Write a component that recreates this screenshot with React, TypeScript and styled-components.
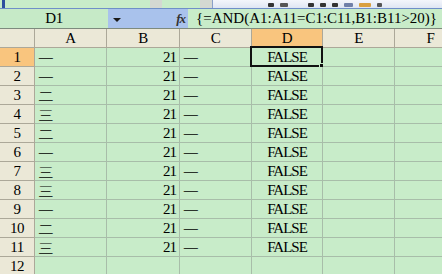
import React from "react";
import styled, { createGlobalStyle } from "styled-components";

const GlobalStyle = createGlobalStyle`
  html, body { margin: 0; padding: 0; background: #c8ecc9; overflow: hidden; }
  * { box-sizing: border-box; }
`;

const Page = styled.div`
  width: 442px;
  height: 274px;
  overflow: hidden;
  background: #c8ecc9;
  font-family: "Liberation Serif", "Noto Sans CJK SC", serif;
  color: #000;
`;

const TopStrip = styled.div`
  display: flex;
  height: 9px;
  border-bottom: 1px solid #6f8fc8;
  background: #c8ecc9;
  overflow: hidden;
`;

const StripSeg = styled.div<{ $w: number; $bg: string }>`
  width: ${(p) => p.$w}px;
  flex: none;
  background: ${(p) => p.$bg};
  height: 100%;
`;

const Toolbar = styled.div`
  flex: 1;
  display: flex;
  align-items: flex-end;
  gap: 6px;
  padding-left: 55px;
  background: linear-gradient(#f4f6fb, #dfe6f3);
  border-left: 1px solid #8aa0c8;
`;

const ToolIcon = styled.div<{ $w: number; $c: string }>`
  width: ${(p) => p.$w}px;
  height: 4px;
  margin-bottom: 1px;
  background: ${(p) => p.$c};
  border-radius: 1px;
`;

const ToolGap = styled.div`
  width: 8px;
`;

const FormulaBar = styled.div`
  display: flex;
  height: 20px;
  border-bottom: 1px solid #7e8a7e;
  line-height: 1;
`;

const NameBox = styled.div`
  width: 108px;
  flex: none;
  display: flex;
  align-items: center;
  justify-content: center;
  font-size: 15px;
  background: #c6eac7;
  letter-spacing: -0.5px;
`;

const NameDrop = styled.div`
  width: 80px;
  flex: none;
  display: flex;
  align-items: center;
  justify-content: space-between;
  padding: 0 3px 0 5px;
  background: #a9c2ec;
`;

const Caret = styled.span`
  width: 0;
  height: 0;
  border-left: 4px solid transparent;
  border-right: 4px solid transparent;
  border-top: 4px solid #1a1a1a;
  margin-top: 2px;
`;

const Fx = styled.span`
  font-family: "Liberation Serif", serif;
  font-style: italic;
  font-weight: bold;
  font-size: 13px;
  color: #333;
  letter-spacing: -1px;
`;

const FormulaText = styled.div`
  flex: 1;
  display: flex;
  align-items: center;
  padding-left: 8px;
  font-size: 15px;
  white-space: nowrap;
  background: #c8ecc9;
  overflow: hidden;
`;

const Sheet = styled.div`
  display: grid;
  grid-template-columns: 35px 72px 73px 72px 71px 72px 72px;
  grid-auto-rows: 19px;
  line-height: 1;
`;

const Header = styled.div<{ $selected?: boolean }>`
  display: flex;
  align-items: center;
  justify-content: center;
  font-size: 15px;
  background: ${(p) => (p.$selected ? "#f9c57e" : "#ebe8d7")};
  border-right: 1px solid #aca899;
  border-bottom: 1px solid #aca899;
  letter-spacing: -0.5px;
`;

const Cell = styled.div<{ $align: "left" | "right" | "center" }>`
  position: relative;
  display: flex;
  align-items: center;
  justify-content: ${(p) =>
    p.$align === "left" ? "flex-start" : p.$align === "right" ? "flex-end" : "center"};
  padding: ${(p) => (p.$align === "left" ? "0 0 0 3px" : p.$align === "right" ? "0 3px 0 0" : "0")};
  font-family: "Liberation Serif", serif;
  font-size: 15px;
  letter-spacing: -1px;
  background: #c8ecc9;
  border-right: 1px solid #a8bda9;
  border-bottom: 1px solid #a8bda9;
  white-space: nowrap;
`;

const CjkText = styled.span`
  display: inline-block;
  font-family: "Noto Sans CJK SC", sans-serif;
  font-size: 13px;
  font-weight: 300;
  letter-spacing: 0;
  transform: scaleX(1.2);
  transform-origin: left center;
`;

const ActiveFrame = styled.div`
  position: absolute;
  left: -2px;
  top: -2px;
  right: -1px;
  bottom: -1px;
  border: 2px solid #111;
  pointer-events: none;
`;

const FillHandle = styled.div`
  position: absolute;
  right: -4px;
  bottom: -4px;
  width: 6px;
  height: 6px;
  background: #111;
  border: 1px solid #c8ecc9;
`;

const colA = ["一", "一", "二", "三", "二", "一", "三", "三", "一", "二", "三"];
const cols = ["A", "B", "C", "D", "E", "F"];

export default function App() {
  return (
    <Page>
      <GlobalStyle />
      <TopStrip>
        <StripSeg $w={2} $bg="#c8ecc9" />
        <StripSeg $w={3} $bg="#2d4f9e" />
        <StripSeg $w={145} $bg="#c8ecc9" />
        <StripSeg $w={12} $bg="#d4d8d2" />
        <StripSeg $w={38} $bg="#c8ecc9" />
        <StripSeg $w={12} $bg="#d4d8d2" />
        <Toolbar>
          <ToolIcon $w={6} $c="#333" />
          <ToolIcon $w={8} $c="#555" />
          <ToolGap />
          <ToolIcon $w={6} $c="#333" />
          <ToolIcon $w={6} $c="#333" />
          <ToolIcon $w={6} $c="#333" />
          <ToolIcon $w={9} $c="#7080a8" />
          <ToolIcon $w={12} $c="#d9a040" />
          <ToolIcon $w={5} $c="#555" />
        </Toolbar>
      </TopStrip>
      <FormulaBar>
        <NameBox>D1</NameBox>
        <NameDrop>
          <Caret />
          <Fx>fx</Fx>
        </NameDrop>
        <FormulaText>{"{=AND(A1:A11=C1:C11,B1:B11>20)}"}</FormulaText>
      </FormulaBar>
      <Sheet>
        <Header />
        {cols.map((c) => (
          <Header key={c} $selected={c === "D"}>
            {c}
          </Header>
        ))}
        {Array.from({ length: 12 }, (_, i) => {
          const r = i + 1;
          const has = r <= 11;
          return (
            <React.Fragment key={r}>
              <Header $selected={r === 1}>{r}</Header>
              <Cell $align="left">{has && <CjkText>{colA[i]}</CjkText>}</Cell>
              <Cell $align="right">{has ? "21" : ""}</Cell>
              <Cell $align="left">{has && <CjkText>一</CjkText>}</Cell>
              <Cell $align="center">
                {has ? "FALSE" : ""}
                {r === 1 && (
                  <ActiveFrame>
                    <FillHandle />
                  </ActiveFrame>
                )}
              </Cell>
              <Cell $align="left" />
              <Cell $align="left" />
            </React.Fragment>
          );
        })}
      </Sheet>
    </Page>
  );
}
